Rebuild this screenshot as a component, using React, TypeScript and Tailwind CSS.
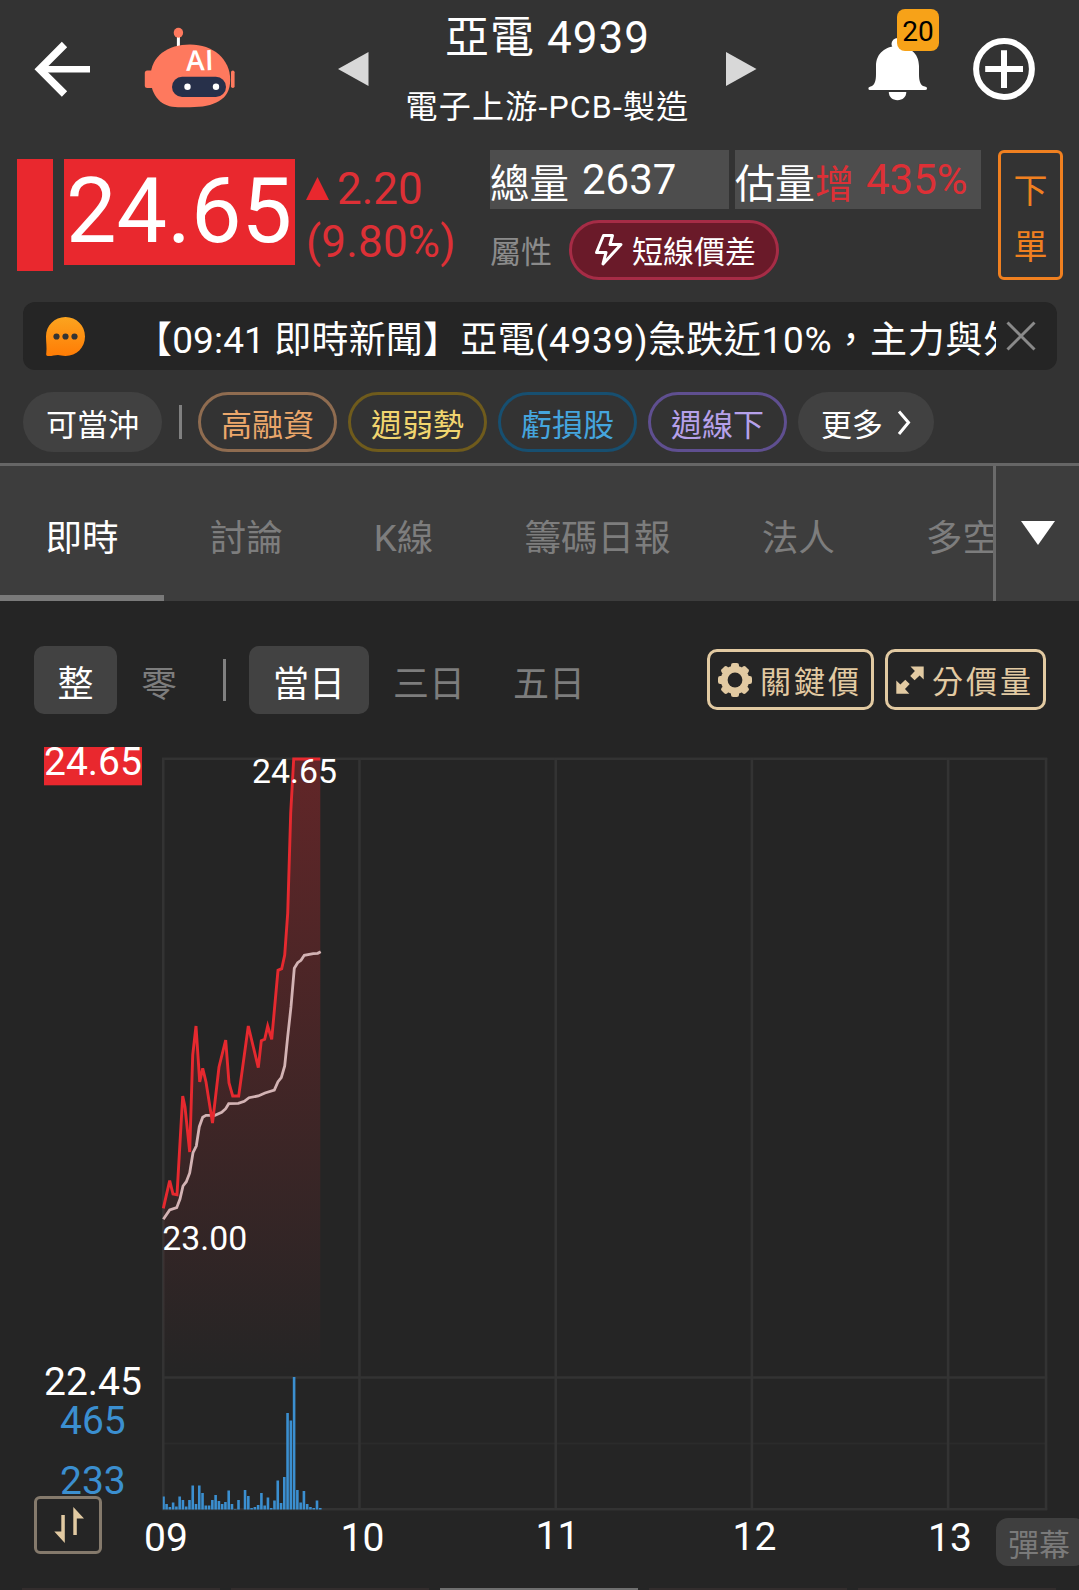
import { useState } from 'react';

const chips = [
  { label: '高融資', className: 'border-[#8f6c50] text-[#eba76b]' },
  { label: '週弱勢', className: 'border-[#6f5b1c] text-[#f1d56f]' },
  { label: '虧損股', className: 'border-[#174f70] text-[#45a5de]' },
  { label: '週線下', className: 'border-[#5f4f90] text-[#b6a1ea]' },
];

const tabs = ['即時', '討論', 'K線', '籌碼日報', '法人', '多空'];
const ranges = ['當日', '三日', '五日'];

const CHART_LEFT = 163.3;
const MINUTE = 196.2 / 60;
const VOLUME_BASE = 1509.5;

const pricePoints =
  '163.3,1208.3 169.7,1180.7 173,1194 177,1194.7 182.7,1096 185,1107 189.7,1152 192.7,1055 196,1026 199.7,1082 202.7,1068.3 206,1082 212.5,1123 219,1067 225.7,1040 229,1083 232.7,1096 238.7,1096 248.3,1026 258.3,1067.7 261.3,1040.7 264.7,1039.3 267.7,1026 271.7,1039.3 278,970.3 281.7,968.7 284.7,955 287.7,913.3 290.7,813 293.7,759 320.3,759';

const averagePoints =
  '163.3,1219.3 169.7,1210 176.7,1207.7 180,1199 183,1186 186.3,1181.7 189.7,1173 193,1152.7 196.3,1146 199.3,1126.7 202.7,1117.3 206,1115.3 215,1115.3 221.7,1112.3 225.7,1108.7 228.7,1103.7 238.3,1103.3 244.3,1101.3 249,1097.7 258.3,1096 265,1093 274.3,1090 278,1081.7 281.3,1077.7 284.7,1066 287.7,1036.7 291,1006.7 294.3,968.3 297.7,962.7 301,960.3 304.3,955.3 313.3,953.7 317.7,953.3 320.7,951.7';

const volumes = [
  13, 5.5, 2.5, 7, 3, 13, 9.5, 3, 9.5, 24, 5.5, 24, 16.5, 4, 4, 9.5, 14.5, 8.5, 5.5, 7.5, 19, 5.5, 0.5, 9.5, 0,
  19.5, 13.5, 1.5, 2.5, 4.5, 16.5, 4, 12, 1.5, 9, 29, 6.5, 32.5, 96.5, 89, 132.5, 19.5, 7, 18.5, 5.5, 2.5, 1.5, 9, 1.5,
];

const hours = [
  { label: '09', x: 166, y: 1550.5 },
  { label: '10', x: 362.5, y: 1550.5 },
  { label: '11', x: 557.5, y: 1549 },
  { label: '12', x: 754.5, y: 1549.5 },
  { label: '13', x: 950, y: 1550.5 },
];

function BackIcon() {
  return (
    <svg width="58" height="60" viewBox="33 39 58 60" fill="none" stroke="#fff">
      <path d="M64.5 44.5 L39.8 69.3 L64.5 94" strokeWidth="7.5" />
      <path d="M40 69.3H90" strokeWidth="6.5" />
    </svg>
  );
}

function RobotIcon() {
  return (
    <svg width="92" height="82" viewBox="144 27 92 82">
      <path d="M178.4 37v10" stroke="#fff" strokeWidth="3" />
      <ellipse cx="178.4" cy="32.7" rx="4.7" ry="5" fill="#fe795e" />
      <rect x="144.8" y="70.5" width="10" height="17.5" rx="2.5" fill="#fe795e" />
      <rect x="231" y="70.5" width="3.6" height="17.5" rx="1.8" fill="#fe795e" />
      <path
        d="M150.6 77 C150.6 56 168 44.6 190 44.6 C213 44.6 230.2 59 230.2 80 C230.2 100 214 107.2 190 107.2 H178 C162 107.2 150.6 97 150.6 77Z"
        fill="#fe795e"
      />
      <rect x="172" y="76.8" width="54" height="20.2" rx="10.1" fill="#27304a" />
      <circle cx="187.5" cy="86.8" r="3.2" fill="#fff" />
      <circle cx="216" cy="86.8" r="3.2" fill="#fff" />
      <text
        x="186.3"
        y="70.8"
        fontSize="28"
        fontFamily="'Open Sans', sans-serif"
        fontWeight="600"
        fill="#fff"
        letterSpacing="0.5"
        transform="rotate(-1.5 186 70)"
      >
        AI
      </text>
    </svg>
  );
}

function BellIcon() {
  return (
    <svg width="60" height="64" viewBox="868 38 60 64" fill="#fff">
      <circle cx="897.5" cy="44" r="6" />
      <path d="M876 66 C876 53 886 46 897.5 46 C909 46 919 53 919 66 V74 C919 80 920 84 923 86 C926 87 927 87 927 88.5 Q927 90 925 90 H870 Q868.4 90 868.4 88.5 C868.4 87 870 87 872 86 C875 84 876 80 876 74Z" />
      <path d="M888.8 92 H906.3 C906.3 97 902.5 100.2 897.5 100.2 C892.5 100.2 888.8 97 888.8 92Z" />
    </svg>
  );
}

function GearIcon() {
  return (
    <svg width="34" height="34" viewBox="-17 -17 34 34" fill="#e2caa2">
      {[0, 45, 90, 135].map((angle) => (
        <rect key={angle} x="-4" y="-17" width="8" height="34" rx="2.2" transform={`rotate(${angle})`} />
      ))}
      <circle r="14.2" />
      <circle r="7.4" fill="#252525" />
    </svg>
  );
}

function ExpandIcon() {
  return (
    <svg width="28" height="28" viewBox="0 0 28 28" fill="#e2caa2">
      <path d="M14.5 0.5 H27.7 V13.5 L23.6 9.6 L18.6 14.2 L14.2 10 L18.9 5Z" />
      <path d="M13.3 27.7 H0.3 V14.5 L4.4 18.4 L9.3 13.8 L13.7 18 L9 23Z" />
    </svg>
  );
}

function Chart() {
  return (
    <svg className="block" width="1079" height="870" viewBox="0 720 1079 870" fontSize="39">
      <defs>
        <linearGradient id="priceFill" x1="0" y1="0" x2="0" y2="1">
          <stop offset="0" stopColor="#e9282e" stopOpacity="0.31" />
          <stop offset="1" stopColor="#e9282e" stopOpacity="0" />
        </linearGradient>
      </defs>

      <path d="M163.3 1443.5H1046" stroke="#2b2b2b" strokeWidth="2" />
      <g stroke="#333333" strokeWidth="2.6">
        <path d="M162 758.7H1047.3M162 1377.5H1047.3M162 1509.3H1047.3" />
        <path d="M163.3 758V1510M359.5 758V1510M555.7 758V1510M751.9 758V1510M948.1 758V1510M1046 758V1510" />
      </g>

      <polygon points={`${pricePoints} 320.3,1377 163.3,1377`} fill="url(#priceFill)" />
      <polyline points={averagePoints} fill="none" stroke="#d3b3b4" strokeWidth="2.8" />
      <polyline points={pricePoints} fill="none" stroke="#e6292f" strokeWidth="2.9" />

      {volumes.map((height, index) => (
        <rect
          key={index}
          x={index === 0 ? 162.8 : CHART_LEFT + index * MINUTE - 1.3}
          y={VOLUME_BASE - height}
          width={index === 0 ? 2 : 2.6}
          height={height}
          fill="#3b8fd0"
        />
      ))}

      <rect x="44" y="747" width="98" height="38.3" fill="#e9282e" />
      <g fill="#fff">
        <text x="44" y="775.3">24.65</text>
        <text x="44" y="1394.5">22.45</text>
        <text x="252" y="783.3" fontSize="33.8">24.65</text>
        <text x="162.3" y="1249.5" fontSize="33.8">23.00</text>
        {hours.map((hour) => (
          <text key={hour.label} x={hour.x} y={hour.y} textAnchor="middle" fontSize="39">
            {hour.label}
          </text>
        ))}
      </g>
      <g fill="#3b8fd0">
        <text x="60" y="1433.5">465</text>
        <text x="60" y="1493.5">233</text>
      </g>
    </svg>
  );
}

export default function App() {
  const [activeTab, setActiveTab] = useState('即時');
  const [range, setRange] = useState('當日');
  const [showNews, setShowNews] = useState(true);

  return (
    <div className="w-[1079px] h-[1590px] overflow-hidden bg-[#252525] text-white font-[Roboto,'Noto_Sans_CJK_TC',sans-serif] whitespace-nowrap">
      <header className="h-[463px] bg-[#333333]">
        <div className="flex h-[150px]">
          <button className="ml-[33px] mt-[39px] h-[60px]" aria-label="back">
            <BackIcon />
          </button>
          <div className="ml-[53px] mt-[27px]">
            <RobotIcon />
          </div>
          <svg className="ml-[102px] mt-[52px]" width="31" height="34" viewBox="0 0 31 34" fill="#d8d8d8">
            <path d="M0 17L30.5 0V34Z" />
          </svg>
          <div className="w-[357px] pt-[10px] text-center">
            <h1 className="text-[44px] leading-[57px] tracking-[1px]">亞電 4939</h1>
            <p className="mt-5 text-[32px] leading-[40px] tracking-[1.2px]">電子上游-PCB-製造</p>
          </div>
          <svg className="mt-[52px]" width="31" height="34" viewBox="0 0 31 34" fill="#d8d8d8">
            <path d="M30.5 17L0 0V34Z" />
          </svg>
          <div className="relative ml-[111px] mt-[38px]">
            <BellIcon />
            <span className="absolute -top-[29px] left-[29px] w-[42px] h-[42px] rounded-[8px] bg-[#f7a218] text-black text-[28px] leading-[45px] text-center">
              20
            </span>
          </div>
          <svg className="ml-[45px] mt-[38px]" width="62" height="62" viewBox="0 0 62 62" fill="none" stroke="#fff" strokeWidth="6">
            <circle cx="31" cy="31" r="27.9" />
            <path d="M12.2 31H50M31 12.2V50" />
          </svg>
        </div>

        <div className="flex h-[152px]">
          <div className="ml-[17px] mt-[9px] w-9 h-[112px] bg-[#e9282e]" />
          <div className="ml-[11px] mt-[9px] w-[231px] h-[106px] bg-[#e9282e] text-[90px] leading-[105px] pl-[2px]">
            24.65
          </div>
          <div className="ml-[11px] mt-[13px] w-[184px] text-[44px] leading-[53px] text-[#dd3036]">
            <div className="flex">
              <svg className="mt-[14px] mr-[8px]" width="23" height="23" viewBox="0 0 23 23" fill="#e9282e">
                <path d="M11.5 0L23 23H0Z" />
              </svg>
              2.20
            </div>
            <div className="tracking-[0.2px]">(9.80%)</div>
          </div>
          <div className="w-[491px]">
            <div className="flex gap-1.5 text-[42px] leading-[60px]">
              <div className="flex w-[239px] h-[59px] bg-[#4d4d4d]">
                <span className="pt-[5px] text-[39.5px]">總量</span>
                <span className="ml-[13px]">2637</span>
              </div>
              <div className="flex w-[246px] h-[59px] bg-[#4d4d4d]">
                <span className="pt-[5px] text-[40px]">估量</span>
                <span className="pt-[5px] text-[39px] text-[#dd3036]">增</span>
                <span className="ml-[12px] text-[#dd3036]">435%</span>
              </div>
            </div>
            <div className="flex mt-[11px] text-[31px]">
              <span className="w-[79px] leading-[66px] text-[#8b8b8b]">屬性</span>
              <div className="flex items-center w-[210px] h-[60px] border-3 border-[#a62c46] rounded-full bg-[#6a1a29] pl-[22px]">
                <svg width="29" height="34" viewBox="0 0 29 34" fill="none" stroke="#fff" strokeWidth="3" strokeLinejoin="round">
                  <path d="M9.5 2.5H18.5L16 11.5H27L9 31L12 19.5H2.5Z" />
                </svg>
                <span className="ml-[9px] pt-[6px] leading-[54px]">短線價差</span>
              </div>
            </div>
          </div>
          <button className="flex flex-col items-center ml-[17px] w-[65px] h-[130px] border-3 border-[#f08020] rounded-md pt-[11px] text-[34px] leading-[55.5px] text-[#f08020]">
            <span>下</span>
            <span>單</span>
          </button>
        </div>

        <div className="flex ml-[23px] w-[1034px] h-[68px] rounded-xl bg-[#252525]">
          {showNews && (
            <>
              <svg className="ml-[23px] mt-[15px]" width="40" height="40" viewBox="0 0 40 40">
                <defs>
                  <linearGradient id="bubble" x1="0" y1="0" x2="0" y2="1">
                    <stop offset="0" stopColor="#fba41f" />
                    <stop offset="1" stopColor="#ff7c05" />
                  </linearGradient>
                </defs>
                <path
                  d="M19.5 0C30.5 0 39 8.5 39 19.5S30.5 39 19.5 39C16 39 14 38 12 38C9 38 5 39.3 2 39C0 38.8 0 37.5 0.3 36C1 31 0 25 0 19.5C0 8.5 8.5 0 19.5 0Z"
                  fill="url(#bubble)"
                />
                <g fill="#333">
                  <circle cx="10.5" cy="19.5" r="3.1" />
                  <circle cx="19.5" cy="19.5" r="3.1" />
                  <circle cx="28.5" cy="19.5" r="3.1" />
                </g>
              </svg>
              <p className="ml-[49px] w-[861px] overflow-hidden text-[37px] leading-[77px] tracking-[0.7px]">
                <span className="tracking-[0.15px]">【09:41 即時新聞】</span>亞電(4939)急跌近10%，主力與外資
              </p>
              <button className="ml-[10px] h-[68px]" aria-label="close" onClick={() => setShowNews(false)}>
                <svg width="30" height="30" viewBox="0 0 30 30" stroke="#8a8a8a" strokeWidth="3">
                  <path d="M1.5 1.5L28.5 28.5M28.5 1.5L1.5 28.5" />
                </svg>
              </button>
            </>
          )}
        </div>

        <div className="flex items-center ml-[23px] mt-[22px] h-[60px] text-[31px] leading-[54px]">
          <div className="w-[139px] h-[60px] rounded-full bg-[#414141] pt-[7px] text-center">可當沖</div>
          <div className="ml-[17px] mr-[16px] w-[3px] h-[34px] bg-[#808080]" />
          <div className="flex gap-[11px]">
            {chips.map((chip) => (
              <div key={chip.label} className={`w-[139px] h-[60px] rounded-full border-3 pt-[4px] text-center ${chip.className}`}>
                {chip.label}
              </div>
            ))}
            <div className="flex w-[136px] h-[60px] rounded-full bg-[#414141] pl-[23px] pt-[7px]">
              更多
              <svg className="ml-[14px] mt-[10px]" width="16" height="28" viewBox="0 0 16 28" fill="none" stroke="#fff" strokeWidth="3">
                <path d="M2 2.5L11.5 13.5L2 25" />
              </svg>
            </div>
          </div>
        </div>
      </header>

      <nav className="flex h-[138px] border-t-[3px] border-[#666666] bg-[#3d3d3d]">
        <div className="flex w-[993px] overflow-hidden text-[36.6px]">
          {tabs.map((tab) => (
            <button
              key={tab}
              onClick={() => setActiveTab(tab)}
              className={`shrink-0 px-[45.5px] pt-[18px] border-b-6 ${
                activeTab === tab ? 'border-[#7a7a7a] text-white' : 'border-transparent text-[#7d7d7d]'
              }`}
            >
              {tab}
            </button>
          ))}
        </div>
        <button className="flex w-[86px] border-l-3 border-[#6a6a6a] pl-[25px] pt-[55px]" aria-label="more tabs">
          <svg width="34" height="24" viewBox="0 0 34 24" fill="#fff">
            <path d="M0 0H34L17 24Z" />
          </svg>
        </button>
      </nav>

      <div className="flex h-[119px] pt-[45px] pl-[34px] text-[36px] leading-[78px] text-[#7d7d7d]">
        <button className="w-[83px] h-[68px] rounded-[10px] bg-[#424242] text-white">整</button>
        <button className="w-[84px] h-[68px]">零</button>
        <div className="ml-[22px] mr-[23px] mt-[13px] w-[3px] h-[42px] bg-[#808080]" />
        {ranges.map((item) => (
          <button
            key={item}
            onClick={() => setRange(item)}
            className={`w-[120px] h-[68px] rounded-[10px] ${range === item ? 'bg-[#424242] text-white' : ''}`}
          >
            {item}
          </button>
        ))}
        <div className="flex gap-[11px] ml-[98px] mt-[3px] text-[31px] leading-[62px] tracking-[3px] text-[#e2caa2]">
          <button className="flex w-[167px] h-[61px] border-3 border-[#e2caa2] rounded-[10px] pl-[8px]">
            <span className="mt-[11px]">
              <GearIcon />
            </span>
            <span className="ml-[8px]">關鍵價</span>
          </button>
          <button className="flex w-[161px] h-[61px] border-3 border-[#e2caa2] rounded-[10px] pl-[8px]">
            <span className="mt-[14px]">
              <ExpandIcon />
            </span>
            <span className="ml-[8px]">分價量</span>
          </button>
        </div>
      </div>

      <div className="relative h-[870px]">
        <Chart />
        <button
          className="absolute left-[34px] top-[776px] w-[68px] h-[58px] border-[3px] border-[#857a6c] rounded-md bg-[#252525]"
          aria-label="swap"
        >
          <svg className="ml-[17px]" width="32" height="38" viewBox="54 1506 32 38" fill="#e2caa2">
            <path d="M61.3 1515H64.8V1543L54.3 1531.5H61.3Z" />
            <path d="M73.3 1535V1507L84 1518.5H76.8V1535Z" />
          </svg>
        </button>
        <div className="absolute left-[996px] top-[798px] w-[90px] h-[48px] rounded-xl bg-[#3f3f3f] pl-[12px] text-[31px] leading-[55px] text-[#7a7a7a]">
          彈幕
        </div>
        <div className="absolute left-[22px] bottom-0 flex gap-[11px]">
          <div className="w-[198px] h-[2px] bg-[#332d2d]" />
          <div className="w-[198px] h-[2px] bg-[#332d2d]" />
          <div className="w-[198px] h-[2px] bg-[#6f6f6f]" />
          <div className="w-[198px] h-[2px] bg-[#332d2d]" />
          <div className="w-[198px] h-[2px] bg-[#332d2d]" />
        </div>
      </div>
    </div>
  );
}
